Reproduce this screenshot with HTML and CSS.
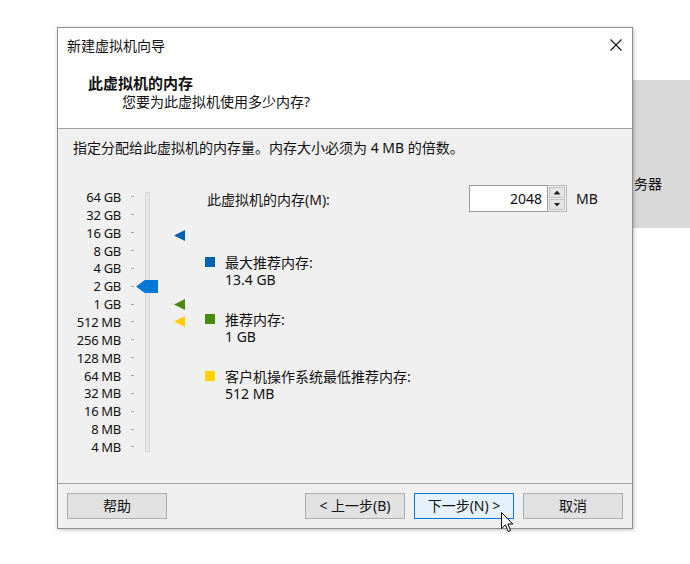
FILE: index.html
```html
<!DOCTYPE html>
<html lang="zh-CN">
<head>
    <meta charset="UTF-8">
    <title>新建虚拟机向导</title>
    <link rel="stylesheet" href="styles.css">
</head>
<body>
<div class="desk">
    <div class="dialog">
        <div class="titlebar">
            <span>新建虚拟机向导</span>
            <svg class="close" width="12" height="12" viewBox="0 0 12 12"><path d="M0.5 0.5 L11.5 11.5 M11.5 0.5 L0.5 11.5" stroke="#111" stroke-width="1.1" fill="none"/></svg>
        </div>
        <div class="header">
            <div class="h-title">此虚拟机的内存</div>
            <div class="h-sub">您要为此虚拟机使用多少内存?</div>
        </div>

        <div class="content">
            <p class="intro">指定分配给此虚拟机的内存量。内存大小必须为 4 MB 的倍数。</p>
            <div class="main">
                <!-- memory scale -->
                <div class="scale">
                    <div class="labels">
                        <div class="row"><span>64 GB</span><i></i></div>
                        <div class="row"><span>32 GB</span><i></i></div>
                        <div class="row"><span>16 GB</span><i></i></div>
                        <div class="row"><span>8 GB</span><i></i></div>
                        <div class="row"><span>4 GB</span><i></i></div>
                        <div class="row"><span>2 GB</span><i></i></div>
                        <div class="row"><span>1 GB</span><i></i></div>
                        <div class="row"><span>512 MB</span><i></i></div>
                        <div class="row"><span>256 MB</span><i></i></div>
                        <div class="row"><span>128 MB</span><i></i></div>
                        <div class="row"><span>64 MB</span><i></i></div>
                        <div class="row"><span>32 MB</span><i></i></div>
                        <div class="row"><span>16 MB</span><i></i></div>
                        <div class="row"><span>8 MB</span><i></i></div>
                        <div class="row"><span>4 MB</span><i></i></div>
                    </div>
                    <div class="track"></div>
                    <div class="thumb"></div>
                    <div class="mark mark-max"></div>
                    <div class="mark mark-rec"></div>
                    <div class="mark mark-min"></div>
                </div>

                <div class="info">
                    <div class="mem-row">
                        <span class="mem-label">此虚拟机的内存(M):</span>
                        <div class="spin">
                            <div class="spin-input">2048</div>
                            <div class="spin-btns">
                                <div class="spin-btn"><b class="up"></b></div>
                                <div class="spin-btn"><b class="down"></b></div>
                            </div>
                        </div>
                        <span class="unit">MB</span>
                    </div>
                    <div class="legend">
                        <div class="item">
                            <span class="sq sq-blue"></span>
                            <div class="item-text">
                                <div class="line">最大推荐内存:</div>
                                <div class="line">13.4 GB</div>
                            </div>
                        </div>
                        <div class="item">
                            <span class="sq sq-green"></span>
                            <div class="item-text">
                                <div class="line">推荐内存:</div>
                                <div class="line">1 GB</div>
                            </div>
                        </div>
                        <div class="item">
                            <span class="sq sq-yellow"></span>
                            <div class="item-text">
                                <div class="line">客户机操作系统最低推荐内存:</div>
                                <div class="line">512 MB</div>
                            </div>
                        </div>
                    </div>
                </div>
            </div>
        </div>

        <div class="footer">
            <button class="btn btn-help">帮助</button>
            <button class="btn">&lt; 上一步(B)</button>
            <button class="btn btn-default">下一步(N) &gt;</button>
            <button class="btn">取消</button>
        </div>
    </div>

    <div class="backwin"><span>务器</span></div>

    <svg class="cursor" width="13" height="21" viewBox="0 0 13 21"><path d="M0.5 0.5 L0.5 16.5 L4.5 12.8 L7.2 19.5 L9.6 18.5 L6.9 12 L11.8 12 Z" fill="#fff" stroke="#000" stroke-width="1" stroke-linejoin="round"/></svg>
</div>
</body>
</html>
```

FILE: styles.css
```css
*{
    box-sizing: border-box;
}
body{
    margin: 0;
    background: #fff;
    font-family: "Noto Sans", "Noto Sans CJK SC", sans-serif;
    font-size: 14px;
    color: #111;
}
.desk{
    position: relative;
    width: 690px;
    height: 564px;
    display: flex;
    align-items: flex-start;
    padding: 27px 0 0 57px;
    overflow: hidden;
}

/* dialog */
.dialog{
    position: relative;
    z-index: 1;
    width: 576px;
    height: 502px;
    border: 1px solid #8f8f8f;
    background: #f0f0f0;
    box-shadow: 1px 1px 4px rgba(0,0,0,.25);
    display: flex;
    flex-direction: column;
}
.titlebar{
    height: 34px;
    background: #fff;
    display: flex;
    align-items: center;
    justify-content: space-between;
    padding: 0 10px 0 9px;
    line-height: 17px;
}
.header{
    height: 67px;
    background: #fff;
    border-bottom: 1px solid #a0a0a0;
    padding-top: 12px;
}
.h-title{
    padding-left: 30px;
    font-size: 15px;
    font-weight: bold;
    line-height: 18px;
}
.h-sub{
    padding-left: 64px;
    line-height: 18px;
    margin-top: 1px;
}

.content{
    flex: 1;
    padding-top: 10px;
}
.intro{
    margin: 0;
    padding-left: 15px;
    line-height: 17px;
}
.main{
    display: flex;
    align-items: flex-start;
    margin-top: 29px;
    padding-left: 9px;
}

/* scale */
.scale{
    position: relative;
    width: 123px;
    margin-top: 3px;
    display: flex;
    align-items: flex-start;
}
.labels .row{
    height: 17.86px;
    display: flex;
    align-items: center;
    font-size: 13px;
    letter-spacing: -0.3px;
}
.labels .row span{
    width: 54px;
    text-align: right;
}
.labels .row i{
    width: 3px;
    height: 1px;
    margin-left: 10px;
    background: #a8a8a8;
}
.track{
    width: 5px;
    height: 260px;
    margin: 4px 0 0 11px;
    background: #e7e7e7;
    border: 1px solid #d5d5d5;
}
.thumb{
    position: absolute;
    left: 69px;
    top: 92px;
    width: 22px;
    height: 13px;
    background: #0078d7;
    clip-path: polygon(0 50%, 40% 0, 100% 0, 100% 100%, 40% 100%);
}
.mark{
    position: absolute;
    left: 107px;
    width: 11px;
    height: 11px;
    clip-path: polygon(100% 0, 0 50%, 100% 100%);
}
.mark-max{
    top: 42px;
    background: #0063b1;
}
.mark-rec{
    top: 111px;
    background: #4a8a12;
}
.mark-min{
    top: 128px;
    background: #ffcd00;
}

/* right column */
.info{
    margin-left: 15px;
    width: 395px;
}
.mem-row{
    height: 27px;
    display: flex;
    align-items: center;
}
.mem-label{
    padding-left: 2px;
    width: 264px;
}
.spin{
    display: flex;
    height: 27px;
}
.spin-input{
    width: 79px;
    background: #fff;
    border: 1px solid #9a9a9a;
    text-align: right;
    padding-right: 5px;
    line-height: 25px;
}
.spin-btns{
    width: 19px;
    display: flex;
    flex-direction: column;
    border: 1px solid #b8b8b8;
    border-left: none;
    background: #f0f0f0;
    padding: 1px;
    gap: 1px;
}
.spin-btn{
    flex: 1;
    background: #e4e4e4;
    border: 1px solid #c4c4c4;
    display: flex;
    align-items: center;
    justify-content: center;
}
.spin-btn b{
    width: 7px;
    height: 4px;
    background: #222;
}
.spin-btn .up{
    clip-path: polygon(50% 0, 100% 100%, 0 100%);
}
.spin-btn .down{
    clip-path: polygon(0 0, 100% 0, 50% 100%);
}
.unit{
    margin-left: 9px;
}
.legend{
    margin-top: 42px;
    display: flex;
    flex-direction: column;
    gap: 23px;
}
.legend .item{
    display: flex;
    align-items: flex-start;
}
.item-text .line{
    height: 17px;
    line-height: 17px;
    overflow: visible;
}
.sq{
    width: 10px;
    height: 10px;
    margin: 3px 10px 0 0;
}
.sq-blue{
    background: #0063b1;
}
.sq-green{
    background: #4a8a12;
}
.sq-yellow{
    background: #ffd200;
}

/* footer */
.footer{
    height: 45px;
    border-top: 1px solid #a0a0a0;
    display: flex;
    align-items: flex-start;
    gap: 9px;
    padding: 9px 9px 0 9px;
}
.btn{
    width: 100px;
    height: 26px;
    background: #e1e1e1;
    border: 1px solid #adadad;
    font-family: "Noto Sans", "Noto Sans CJK SC", sans-serif;
    font-size: 14px;
    color: #111;
    padding: 0;
    line-height: 22px;
}
.btn-help{
    margin-right: auto;
}
.btn-default{
    background: #e5f1fb;
    border-color: #0078d7;
}

/* window behind the dialog */
.backwin{
    width: 57px;
    height: 148px;
    margin-top: 53px;
    background: #d9d9d9;
    white-space: nowrap;
    padding: 95px 0 0 1px;
    line-height: 17px;
}

.cursor{
    position: absolute;
    left: 501px;
    top: 512px;
    z-index: 2;
}
```
